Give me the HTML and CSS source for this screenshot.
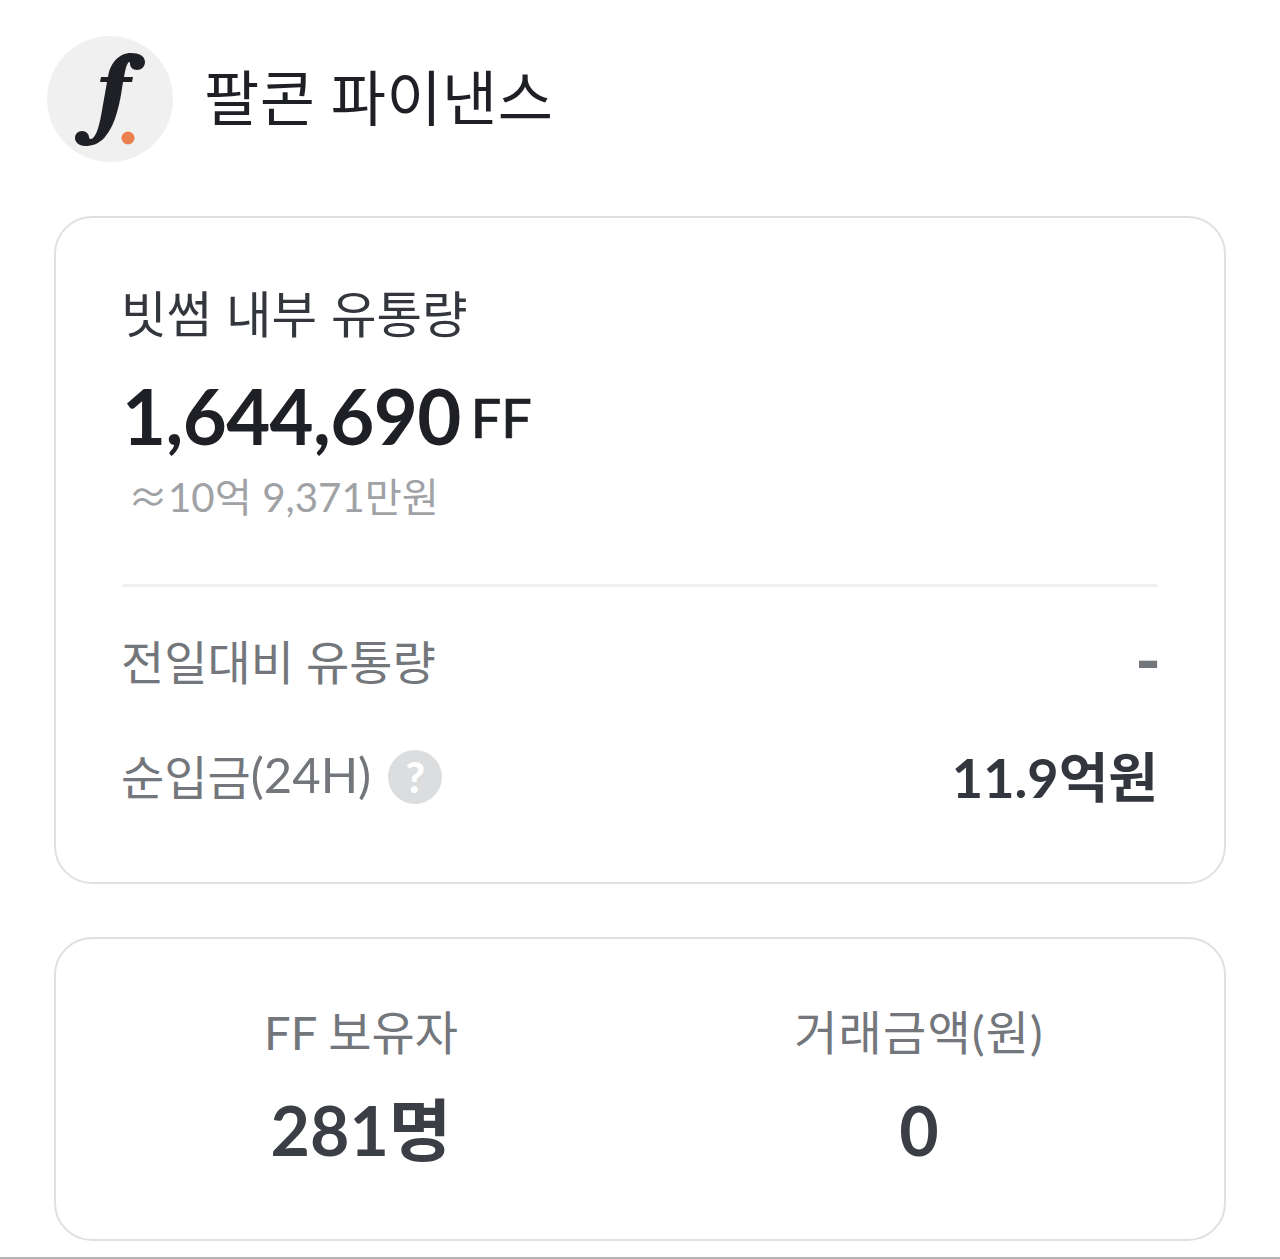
FILE: index.html
```html
<!DOCTYPE html>
<html lang="ko">
<head>
<meta charset="utf-8">
<title>팔콘 파이낸스</title>
<link rel="stylesheet" href="styles.css">
</head>
<body>
<main class="page">
  <header class="head">
    <div class="logo">
      <svg viewBox="0 0 126 126" width="126" height="126" aria-hidden="true">
        <path class="logo-f" d="M98 26C98 31 94 34 90 34C86 34 83 31 83 28C83 26 82 25 81 27C79 30 78 35 77 41L86 41L85 46L76 46C73 67 69 88 58 101C52 108 45 110 38 110C32 110 28 106 28 102C28 98 31 95 35 95C39 95 42 98 42 101C42 103 44 104 46 102C50 98 52 90 54 80L60 46L53 46L54 41L61 41C63 27 72 17 84 17C92 17 98 20 98 26Z"/>
        <circle class="logo-dot" cx="81" cy="102" r="6.5"/>
      </svg>
    </div>
    <h1 class="title">팔콘 파이낸스</h1>
  </header>

  <section class="card card-main">
    <h2 class="label">빗썸 내부 유통량</h2>
    <div class="amount"><span class="amount-num">1,644,690</span><span class="amount-unit">FF</span></div>
    <div class="approx"><span class="approx-sign">≈</span>10억 9,371만원</div>
    <hr class="divider">
    <div class="row row-first">
      <span class="row-label">전일대비 유통량</span>
      <span class="row-dash">-</span>
    </div>
    <div class="row row-second">
      <span class="row-label">순입금<span class="row-paren">(24H)</span><span class="help">?</span></span>
      <span class="row-value">11.9억원</span>
    </div>
  </section>

  <section class="card card-stats">
    <div class="stat">
      <div class="stat-label">FF 보유자</div>
      <div class="stat-value">281명</div>
    </div>
    <div class="stat">
      <div class="stat-label stat-label-wide">거래금액(원)</div>
      <div class="stat-value">0</div>
    </div>
  </section>
</main>
</body>
</html>
```

FILE: styles.css
```css
* { box-sizing: border-box; }
html, body { margin: 0; padding: 0; background: #fff; }
body {
  height: 1259px;
  overflow: hidden;
  font-family: Lato, "Noto Sans CJK KR", sans-serif;
  color: #1e2026;
}
.page {
  height: 1259px;
  padding: 36px 54px 0;
  border-bottom: 2px solid #b4b4b4;
}
.head { display: flex; align-items: center; gap: 31px; margin-left: -7px; height: 126px; }
.logo { width: 126px; height: 126px; border-radius: 50%; background: #f0f0f0; flex: none; }
.logo svg { display: block; }
.logo-f { fill: #1e2026; }
.logo-dot { fill: #e9804d; }
.title { margin: -8px 0 0; font-size: 60px; font-weight: 400; line-height: 1; color: #1e2026; font-family: "Noto Sans CJK KR", sans-serif; letter-spacing: 0.5px; word-spacing: -2px; }
.card {
  border: 2px solid #dfe0e1;
  border-radius: 38px;
  background: #fff;
  width: 1172px;
}
.card-main { margin-top: 54px; height: 668px; padding: 66px 66px 0; }
.label { margin: 0 0 0 -1px; font-size: 49.5px; line-height: 56px; font-weight: 400; color: #33363d; font-family: "Noto Sans CJK KR", sans-serif; }
.amount { margin-top: 38px; height: 76px; line-height: 76px; white-space: nowrap; }
.amount-num { font-size: 76px; font-weight: 700; letter-spacing: -0.6px; color: #1e2026; }
.amount-unit { font-size: 54px; font-weight: 500; margin-left: 10px; letter-spacing: 0; color: #1e2026; vertical-align: 7px; -webkit-text-stroke: 0.6px #1e2026; }
.approx { margin-top: 16px; font-size: 40.3px; line-height: 50px; color: #a0a2a5; padding-left: 6px; white-space: nowrap; }
.approx-sign { font-family: "Noto Sans CJK KR", sans-serif; font-size: 40px; }
.divider { border: 0; height: 3px; background: #f0f0f1; margin: 62px 0 0; }
.row { display: flex; justify-content: space-between; align-items: center; height: 60px; }
.row-first { margin-top: 42px; }
.row-second { margin-top: 55px; }
.row-label { display: inline-flex; align-items: center; font-size: 47px; color: #73767b; margin-left: -1px; }
.row-paren { font-size: 49px; }
.help {
  width: 54px; height: 54px; margin: 6px 0 0 17px; border-radius: 50%;
  background: #dcddde; color: #fff; font-size: 42px; font-weight: 900;
  display: inline-flex; align-items: center; justify-content: center;
}
.row-dash { font-size: 70px; line-height: 60px; font-weight: 700; color: #73767b; margin-right: -3px; }
.row-value { font-size: 54px; font-weight: 700; color: #33363d; }
.card-stats {
  margin-top: 53px; height: 304px; padding-top: 65px;
  display: grid; grid-template-columns: 1fr 1fr; column-gap: 0;
  padding-left: 26px; padding-right: 26px;
}
.stat { text-align: center; }
.stat-label { font-size: 47px; line-height: 56px; color: #73767b; }
.stat-label-wide { letter-spacing: 1.2px; }
.stat-value { margin-top: 32px; font-size: 68px; line-height: 76px; font-weight: 700; color: #3b3e45; }
```
